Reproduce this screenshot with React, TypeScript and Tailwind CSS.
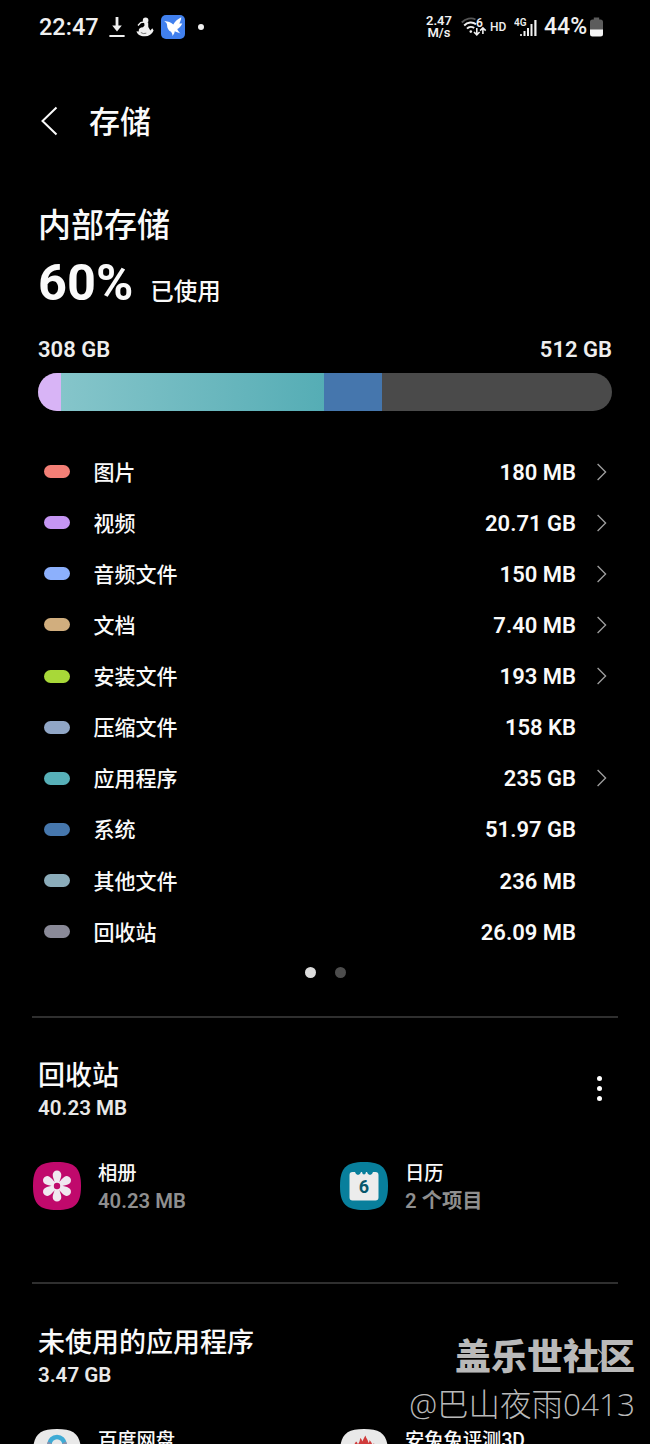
import React from "react";

const categories: { name: string; size: string; color: string; link: boolean }[] = [
  { name: "图片", size: "180 MB", color: "bg-[#f37f76]", link: true },
  { name: "视频", size: "20.71 GB", color: "bg-[#c595f3]", link: true },
  { name: "音频文件", size: "150 MB", color: "bg-[#8cb0fc]", link: true },
  { name: "文档", size: "7.40 MB", color: "bg-[#d1ae7e]", link: true },
  { name: "安装文件", size: "193 MB", color: "bg-[#a8d838]", link: true },
  { name: "压缩文件", size: "158 KB", color: "bg-[#90a6c6]", link: false },
  { name: "应用程序", size: "235 GB", color: "bg-[#57b0b8]", link: true },
  { name: "系统", size: "51.97 GB", color: "bg-[#4677ad]", link: false },
  { name: "其他文件", size: "236 MB", color: "bg-[#8bacba]", link: false },
  { name: "回收站", size: "26.09 MB", color: "bg-[#8a8a98]", link: false },
];

const StatusBar = () => (
  <div className="flex h-[54px] items-center pl-[39px] pr-[47px] text-[#f0f0f0]">
    <span className="w-[59px] whitespace-nowrap text-[23.5px] font-medium leading-[28px]">22:47</span>
    <svg className="ml-[11px]" width="16" height="22" viewBox="0 0 16 22" fill="currentColor">
      <path d="M6.600 1h2.800v8.600h3.400L8 15.600 3.200 9.600h3.400zM.4 19h15.200v2H.4z" />
    </svg>
    <svg className="ml-[11px]" width="18" height="20" viewBox="0 0 18 20" fill="currentColor">
      <circle cx="9.600" cy="3.400" r="2.800" />
      <path d="M8.200 5.500h4L12.300 10l2 3.500L16.300 11.300 17.600 13.500C16 17.500 12.500 19.500 8.500 19.300 4.500 19.200 1 17.300.5 14.200L2.700 14.400C2.500 11.800 4.300 10.300 7 10.300L8.500 8.500z" />
      <path d="M2 8.400 4.700 5.600 8 5" fill="none" stroke="currentColor" strokeWidth="1.500" />
      <path d="M4.800 15.500q2.300 1.800 5.500.7" fill="none" stroke="#444" strokeWidth=".7" />
    </svg>
    <span className="ml-[7px] flex h-[24px] w-[24px] items-center justify-center rounded-[5px] bg-[#4180ee]">
      <svg width="24" height="24" viewBox="0 0 24 24" fill="#fff">
        <path d="M3.200 6.300C6 6 9.300 6.700 12.300 9.400 14 6.500 16.800 4 20.300 2.300 20 5 19.200 7 18.300 8.600L21.300 8.400C19.800 11.200 18.300 13 16.300 14 16.800 15.800 18 17 19.500 18.500 17 17.700 15 17 13.800 16.300 13.500 18 12.800 19.500 11.500 21 11.500 19.300 11 18 10 16.800 7.500 15.500 6 13 6.100 10.200 6 8.300 4.800 7.200 3.200 6.300z" />
      </svg>
    </span>
    <span className="ml-[13px] h-[6px] w-[6px] rounded-full bg-[#f0f0f0]" />

    <div className="ml-auto flex items-center">
      <div className="flex w-[26px] flex-col items-center text-[13px] font-semibold leading-[12px]">
        <span>2.47</span>
        <span>M/s</span>
      </div>
      <svg className="ml-[9px]" width="26" height="20" viewBox="0 0 26 20" fill="none" stroke="currentColor" strokeWidth="1.900">
        <path d="M.8 5.500C4.500 1.500 10.500.3 14.500 2.500" stroke="#555" />
        <path d="M3.200 8.500c3.300-3.600 8.500-4 11.800-1.200M6 11.600c2-2.200 5-2.300 7.200-.5" />
        <circle cx="9.800" cy="14.600" r="1.300" fill="currentColor" stroke="none" />
        <path d="M15.800 11v6.500M13 15l2.800 2.800 2.800-2.800M21.900 17V11M19.100 13.600l2.800-2.800 2.800 2.800" strokeWidth="1.600" />
        <text x="15" y="9.500" fill="currentColor" stroke="none" className="text-[12px] font-semibold">6</text>
      </svg>
      <span className="ml-[3px] w-[19px] text-[12px] font-medium leading-[14px]">HD</span>
      <svg className="ml-[5px]" width="23" height="20" viewBox="0 0 23 20" fill="currentColor">
        <text x="0" y="8.500" className="text-[10px] font-semibold">4G</text>
        <rect x="6" y="17" width="2" height="2" rx=".8" />
        <rect x="9.500" y="14" width="2" height="5" />
        <rect x="13" y="11" width="2" height="8" />
        <rect x="16.500" y="7" width="2" height="12" />
        <rect x="20.300" y="3" width="2.200" height="16" />
      </svg>
      <span className="ml-[7px] w-[43px] whitespace-nowrap text-[23px] font-medium leading-[28px]">44%</span>
      <svg className="ml-[3px]" width="13" height="20" viewBox="0 0 13 20">
        <path d="M3.800 2.500V.5h5.400v2h1.300q2.500 0 2.500 2.500V13H0V5q0-2.500 2.500-2.500z" fill="#5c5c5c" />
        <path d="M0 12.500h13V17q0 2.500-2.500 2.500h-8Q0 19.500 0 17z" fill="#f4f4f4" />
      </svg>
    </div>
  </div>
);

const UsageBar = () => (
  <div className="mt-[11px] flex h-[38px] overflow-hidden rounded-full bg-[#4a4a4a]">
    <div className="w-[23px] bg-[#d8b4f6]" />
    <div className="w-[263px] bg-linear-to-r from-[#85c5ca] to-[#55adb5]" />
    <div className="w-[58px] bg-[#4576ad]" />
  </div>
);

const Chevron = () => (
  <svg width="10" height="18" viewBox="0 0 10 18" fill="none" stroke="#a0a0a0" strokeWidth="1.300">
    <path d="M.6 1l8 8-8 8" />
  </svg>
);

const GalleryIcon = () => (
  <svg width="48" height="48" viewBox="0 0 48 48">
    <path d="M24 0C42 0 48 6 48 24s-6 24-24 24S0 42 0 24 6 0 24 0z" fill="#c0096c" />
    <g fill="#f0e8f0">
      {[0, 60, 120, 180, 240, 300].map((angle) => (
        <path
          key={angle}
          d="M21.800 21C21 17.500 19.700 15.500 19.700 12.800a4.300 4.300 0 0 1 8.600 0C28.300 15.500 27 17.500 26.200 21z"
          transform={`rotate(${angle} 24 24)`}
        />
      ))}
      <circle cx="24" cy="24" r="4.500" />
    </g>
    <circle cx="24" cy="24" r="3.200" fill="#c0096c" />
  </svg>
);

const CalendarIcon = () => (
  <svg width="48" height="48" viewBox="0 0 48 48">
    <path d="M24 0C42 0 48 6 48 24s-6 24-24 24S0 42 0 24 6 0 24 0z" fill="#087f9c" />
    <path d="M12.500 10h2.500q.8 3 3 3t3-3h1q.4 2.500 2 2.500t2-2.500h1q.8 3 3 3t3-3h2.500q3 0 3 3v22.500q0 3-3 3h-23q-3 0-3-3V13q0-3 3-3z" fill="#ececec" />
    <text x="24" y="30.500" textAnchor="middle" fill="#07566b" className="text-[18px] font-bold">6</text>
  </svg>
);

const NetdiskIcon = () => (
  <svg width="48" height="48" viewBox="0 0 48 48">
    <path d="M24 0C42 0 48 6 48 24s-6 24-24 24S0 42 0 24 6 0 24 0z" fill="#e9e9e9" />
    <circle cx="24" cy="15.500" r="7.500" fill="none" stroke="#3fabd5" strokeWidth="4.500" />
    <path d="M16.800 13.500q-.8 1.500-.3 4M31.200 13.500q.8 1.500.3 4" fill="none" stroke="#8b91ad" strokeWidth="4.500" />
  </svg>
);

const BenchmarkIcon = () => (
  <svg width="48" height="48" viewBox="0 0 48 48">
    <path d="M24 0C42 0 48 6 48 24s-6 24-24 24S0 42 0 24 6 0 24 0z" fill="#e9e9e9" />
    <path d="M12 25C11 19 13.500 17 16 12.500c1.300 1 1.700 1.700 1.700 3 2-2 2-4 2.500-6.500 1.300 1 1.800 2 2 3.500C23.500 10.500 24 8.500 25.500 6.500c.5 3 2.500 4 3 7.500 1-1 1-2 1-3 2 2 3 4 3 7 1.200-1 1.300-2 1-4 3 3 4 7 3 11z" fill="#d03c3c" />
  </svg>
);

const AppItem: React.FC<{ icon: React.ReactNode; name: string; detail?: string }> = ({ icon, name, detail }) => {
  return (
    <div className="flex w-[307px] shrink-0 gap-[17px]">
      <div className="h-[48px] w-[48px] shrink-0">{icon}</div>
      <div className="flex flex-col whitespace-nowrap">
        <span className="h-[24px] text-[19.3px] font-medium leading-[24px]">{name}</span>
        {detail && <span className="text-[20.3px] font-semibold leading-[30px] text-[#8f8f8f]">{detail}</span>}
      </div>
    </div>
  );
};

export default function App() {
  return (
    <div className="relative h-[1444px] w-[650px] overflow-hidden bg-black font-['Roboto','Noto_Sans_CJK_SC',sans-serif] text-[#fafafa]">
      <StatusBar />

      <header className="mt-[42px] flex h-[50px] items-center pl-[41px]">
        <svg width="17" height="30" viewBox="0 0 17 30" fill="none" stroke="#fafafa" strokeWidth="2">
          <path d="M15.500 1.500 1.500 15l14 13.500" />
        </svg>
        <h1 className="ml-[31px] pt-[3px] text-[31px] font-medium leading-[50px]">存储</h1>
      </header>

      <section className="px-[38px] pt-[56px]">
        <h2 className="h-[48px] text-[33px] font-medium leading-[48px]">内部存储</h2>
        <div className="flex h-[62px] items-baseline">
          <span className="text-[50.500px] font-bold leading-[66px]">60%</span>
          <span className="ml-[17px] text-[23.500px] font-medium">已使用</span>
        </div>
        <div className="mt-[24px] flex h-[26px] justify-between text-[22px] font-semibold leading-[27px] text-[#eee]">
          <span>308 GB</span>
          <span>512 GB</span>
        </div>
        <UsageBar />
      </section>

      <ul className="mt-[35px] pl-[44px] pr-[43px]">
        {categories.map((item) => (
          <li key={item.name} className="flex h-[51.140px] items-center">
            <span className={`h-[13px] w-[26px] rounded-full ${item.color}`} />
            <span className="ml-[23.500px] pt-[2px] text-[21px] font-medium leading-[30px]">{item.name}</span>
            <span className="ml-auto pt-[2px] text-[22px] font-semibold leading-[30px]">{item.size}</span>
            <span className="ml-[21px] w-[10px]">{item.link && <Chevron />}</span>
          </li>
        ))}
      </ul>

      <div className="mt-[9.600px] flex justify-center gap-[19px]">
        <span className="h-[11px] w-[11px] rounded-full bg-[#dcdcdc]" />
        <span className="h-[11px] w-[11px] rounded-full bg-[#4d4d4d]" />
      </div>

      <section className="mx-[32px] mt-[38px] h-[266px] border-t-2 border-[#2f2f2f]">
        <div className="flex items-center justify-between pl-[6px] pr-[16px] pt-[40px]">
          <div>
            <h3 className="text-[27px] font-medium leading-[36px]">回收站</h3>
            <p className="text-[20.600px] font-semibold leading-[28px] text-[#e8e8e8]">40.23 MB</p>
          </div>
          <div className="mt-[-3px] flex flex-col gap-[5px]">
            <span className="h-[5px] w-[5px] rounded-full bg-white" />
            <span className="h-[5px] w-[5px] rounded-full bg-white" />
            <span className="h-[5px] w-[5px] rounded-full bg-white" />
          </div>
        </div>
        <div className="ml-[1px] mt-[40.500px] flex">
          <AppItem icon={<GalleryIcon />} name="相册" detail="40.23 MB" />
          <AppItem icon={<CalendarIcon />} name="日历" detail="2 个项目" />
        </div>
      </section>

      <section className="mx-[32px] border-t-2 border-[#2f2f2f]">
        <div className="flex items-center justify-between pl-[6px] pr-[11px] pt-[41px]">
          <div>
            <h3 className="text-[27px] font-medium leading-[36px]">未使用的应用程序</h3>
            <p className="text-[20.600px] font-semibold leading-[28px] text-[#e8e8e8]">3.47 GB</p>
          </div>
          <Chevron />
        </div>
        <div className="ml-[1px] mt-[40px] flex">
          <AppItem icon={<NetdiskIcon />} name="百度网盘" />
          <AppItem icon={<BenchmarkIcon />} name="安兔兔评测3D" />
        </div>
      </section>

      {/* forum signature stamped over the page */}
      <div className="absolute bottom-[17px] right-[15px] text-right text-[#b9b9b9]">
        <div className="text-[36px] font-black leading-[46px]">盖乐世社区</div>
        <div className="font-['Open_Sans','Noto_Sans_CJK_SC',sans-serif] text-[31.500px] font-light leading-[46px]">@巴山夜雨0413</div>
      </div>
    </div>
  );
}
